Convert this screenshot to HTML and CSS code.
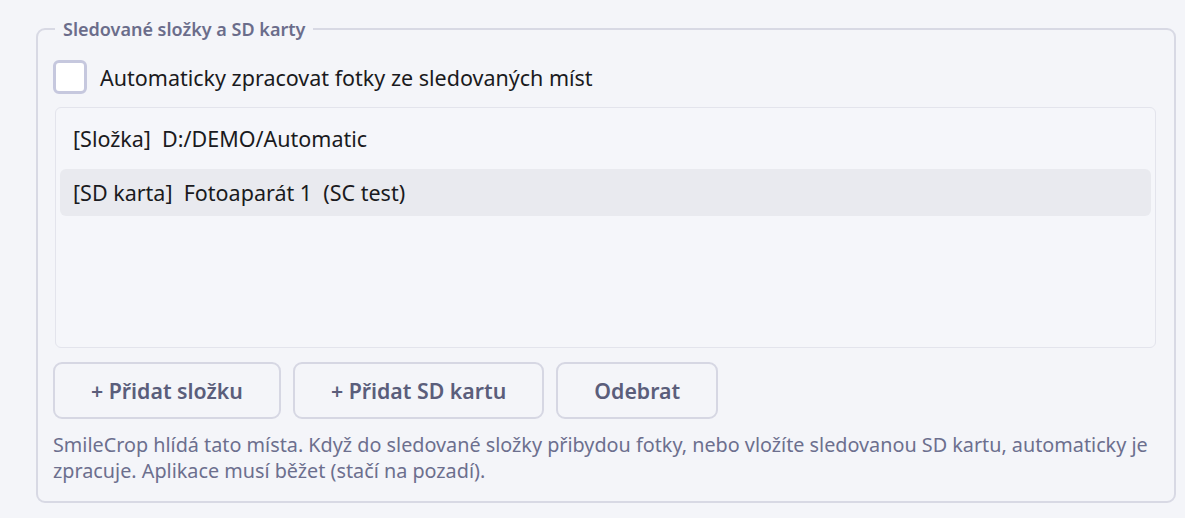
FILE: index.html
```html
<!DOCTYPE html>
<html lang="cs">
<head>
<meta charset="utf-8">
<link rel="stylesheet" href="styles.css">
</head>
<body>
<fieldset class="group">
  <legend class="group-title">Sledované složky a SD karty</legend>
  <label class="check-row">
    <span class="checkbox"></span>
    <span class="check-label">Automaticky zpracovat fotky ze sledovaných míst</span>
  </label>
  <div class="list">
    <div class="item">[Složka]&nbsp; D:/DEMO/Automatic</div>
    <div class="item selected">[SD karta]&nbsp; Fotoaparát 1&nbsp; (SC test)</div>
  </div>
  <div class="buttons">
    <button class="btn">+ Přidat složku</button>
    <button class="btn">+ Přidat SD kartu</button>
    <button class="btn">Odebrat</button>
  </div>
  <p class="help">SmileCrop hlídá tato místa. Když do sledované složky přibydou fotky, nebo vložíte sledovanou SD kartu, automaticky je zpracuje. Aplikace musí běžet (stačí na pozadí).</p>
</fieldset>
</body>
</html>
```
FILE: styles.css
```css
* { box-sizing: border-box; }
html, body { margin: 0; padding: 0; }
body {
  background: #f4f5f9;
  font-family: "Noto Sans", "DejaVu Sans", sans-serif;
  width: 1185px;
  height: 518px;
  overflow: hidden;
  padding: 19px 9px 0 36px;
}
.group {
  margin: 0;
  border: 2px solid #d8d9e4;
  border-radius: 9px;
  padding: 0 16px 0 15px;
  height: 484px;
}
.group-title {
  margin-left: 2px;
  padding: 0 8px;
  font-size: 18px;
  line-height: 20px;
  font-weight: 600;
  color: #6b6d8b;
}
.check-row {
  display: flex;
  align-items: center;
  gap: 13px;
  margin-top: 21px;
  height: 34px;
}
.checkbox {
  width: 34px;
  height: 34px;
  border: 3px solid #c6c8de;
  border-radius: 6px;
  background: #ffffff;
  flex: none;
}
.check-label {
  font-size: 21.5px;
  color: #1a1a20;
}
.list {
  margin: 13px 2px 0 2px;
  height: 241px;
  border: 1px solid #e3e4ec;
  border-radius: 6px;
  background: #f5f6fa;
  padding: 6px 4px;
  display: flex;
  flex-direction: column;
  gap: 7px;
}
.item {
  height: 48px;
  display: flex;
  align-items: center;
  padding-left: 13px;
  font-size: 21.5px;
  color: #1a1a20;
  border-radius: 6px;
}
.item.selected {
  background: #e9eaef;
  height: 47px;
}
.buttons {
  display: flex;
  gap: 12px;
  margin-top: 14px;
}
.btn {
  height: 57px;
  padding: 0 36px;
  border: 2px solid #d6d7e3;
  border-radius: 9px;
  background: #f4f5f9;
  font-family: inherit;
  font-size: 21.3px;
  font-weight: 600;
  color: #5b5e7b;
}
.help {
  margin: 13px 0 0 0;
  font-size: 19.8px;
  line-height: 26px;
  color: #6c6f8e;
}
```
